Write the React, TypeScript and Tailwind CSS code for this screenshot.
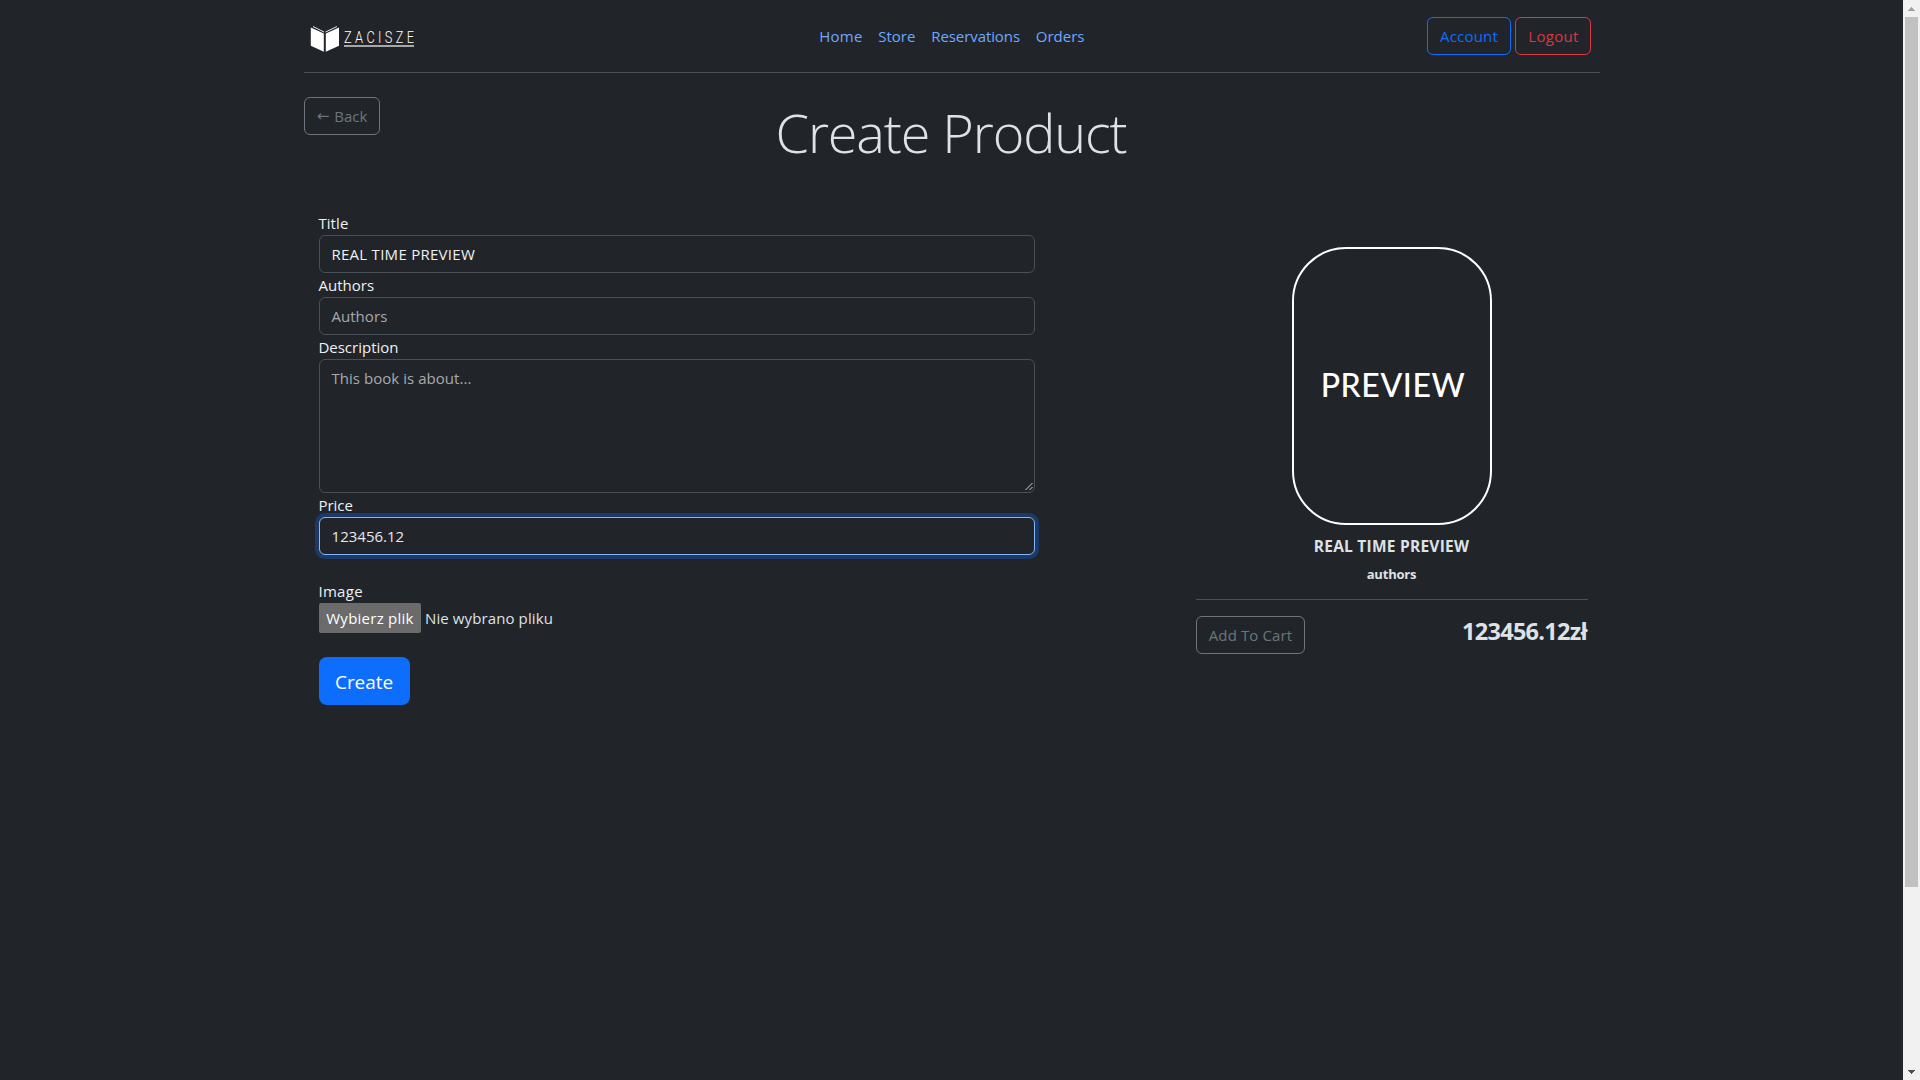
import React, { ReactNode } from "react";

function Label({ children }: { children: ReactNode }) {
  return <label className="-ml-[0.6px] block h-[24px] leading-[24px] text-[#eef1f3]">{children}</label>;
}

function Logo() {
  return (
    <div className="flex h-[56px] w-[110px] items-start pl-[6px] pt-[8px]">
      <svg width="30" height="28" viewBox="0 0 30 28" className="shrink-0">
        <path d="M0.8 2.6 L13.8 8.4 V26.8 L0.8 20.8 Z M29 2.6 L15.8 8.4 V26.8 L29 20.8 Z" fill="#fff" />
        <path d="M3 1.5 L14 7 M27 1.5 L15.5 7" stroke="#fff" strokeWidth="0.9" fill="none" />
      </svg>
      <div className="ml-[4px] mt-[5px] h-[17px] w-[70px] border-b-2 border-[#a4a7a9] font-['Roboto'] text-[16px] leading-[15px] text-white">
        <span className="block w-[88px] origin-left scale-x-[0.8] font-light tracking-[4.2px]">ZACISZE</span>
      </div>
    </div>
  );
}

function Scrollbar() {
  return (
    <div className="flex h-[1080px] w-[17px] shrink-0 flex-col items-center bg-[#f1f1f1]">
      <div className="flex h-[17px] items-center">
        <svg width="7" height="4" viewBox="0 0 7 4" shapeRendering="crispEdges">
          <path d="M3 0h1v1h1v1h1v1h1v1H0V3h1V2h1V1h1z" fill="#a3a3a3" />
        </svg>
      </div>
      <div className="h-[870px] w-[13px] bg-[#c1c1c1]" />
      <div className="mt-auto flex h-[17px] items-center">
        <svg width="7" height="4" viewBox="0 0 7 4" shapeRendering="crispEdges">
          <path d="M0 0h7v1H6v1H5v1H4v1H3V3H2V2H1V1H0z" fill="#505050" />
        </svg>
      </div>
    </div>
  );
}

export default function App() {
  return (
    <div className="flex h-[1080px] w-[1920px] overflow-hidden bg-[#212529] font-['Open_Sans','Noto_Sans',sans-serif] text-[15px] leading-[24px] text-[#dee2e6]">
      <div className="flex-1">
        <div className="ml-[304px] w-[1296px]">
          <header className="flex h-[73px] items-start justify-between border-b border-[#4d5154] pt-[17px]">
            <div className="w-[515px]">
              <Logo />
            </div>
            <nav className="-ml-px flex gap-[16px] pt-[7px] text-[#6ea8fe]">
              <a className="w-[43px] tracking-[0.27px]">Home</a>
              <a className="w-[37px]">Store</a>
              <a className="w-[88.5px] tracking-[-0.08px]">Reservations</a>
              <a className="w-[48px]">Orders</a>
            </nav>
            <div className="flex w-[515px] justify-end gap-[4px] pr-[9px]">
              <button className="h-[38px] w-[84px] rounded-[6px] border border-[#0d6efd] tracking-[0.2px] text-[#0d6efd]">Account</button>
              <button className="h-[38px] w-[76px] rounded-[6px] border border-[#dc3545] pl-px tracking-[0.3px] text-[#dc3545]">Logout</button>
            </div>
          </header>

          <div className="flex h-[138px] items-start justify-between pt-[24px]">
            <button className="flex h-[38px] w-[76px] items-center justify-center gap-[5px] rounded-[6px] border border-[#6c757d] text-[#6c757d]">
              <span className="font-['DejaVu_Sans'] text-[15px]">←</span>
              <span>Back</span>
            </button>
            <h1 className="-ml-[2px] mt-[2px] whitespace-nowrap text-[54px] font-light leading-[67px] tracking-[-1.11px]">Create Product</h1>
            <div className="w-[76px]" />
          </div>

          <main className="flex justify-between pl-[15px] pr-[12px]">
            <form className="w-[716px]">
              <Label>
                <span className="tracking-[0.08px]">Title</span>
              </Label>
              <div className="h-[38px] rounded-[6px] border border-[#495057] px-[11.4px] py-[6px] tracking-[0.28px] text-[#eef1f3]">REAL TIME PREVIEW</div>
              <Label>
                <span className="tracking-[0.04px]">Authors</span>
              </Label>
              <div className="h-[38px] rounded-[6px] border border-[#495057] px-[11.4px] py-[6px] tracking-[0.06px] text-[#a7aaad]">Authors</div>
              <Label>Description</Label>
              <div className="flex h-[134px] justify-between rounded-[6px] border border-[#495057] py-[6px] pl-[11.4px] tracking-[0.05px] text-[#a7aaad]">
                This book is about...
                <svg width="10" height="10" viewBox="0 0 10 10" className="-mb-[6px] -mr-px self-end">
                  <path d="M0.5 8 L7.5 1 M4.5 8 L7.5 5" stroke="#d0d0d0" strokeWidth="1" />
                </svg>
              </div>
              <Label>Price</Label>
              <div className="h-[38px] rounded-[6px] border border-[#86b7fe] px-[11.6px] py-[6px] text-[#e6e9ec] shadow-[0_0_0_4px_#1b3a69]">123456.12</div>
              <div className="mt-[24px]">
                <Label>
                  <span className="tracking-[0.3px]">Image</span>
                </Label>
              </div>
              <div className="flex h-[30px] items-center gap-[4px]">
                <button type="button" className="h-[30px] w-[102px] rounded-[2px] bg-[#6b6b6b] tracking-[0.25px] text-white">Wybierz plik</button>
                <span className="tracking-[0.11px]">Nie wybrano pliku</span>
              </div>
              <button type="button" className="mt-[24px] h-[48px] w-[91px] rounded-[8px] bg-[#0d6efd] pr-px pt-[2px] text-[19px] tracking-[-0.07px] text-white">Create</button>
            </form>

            <section className="w-[392px] pt-[36px]">
              <div className="mx-auto flex h-[278px] w-[200px] items-center justify-center rounded-[54px] border-2 border-white">
                <span className="pb-[3px] pl-[2px] font-['Lato'] text-[32px] font-medium leading-[32px] tracking-[0.57px] text-white">PREVIEW</span>
              </div>
              <h6 className="mt-[12px] h-[19px] pr-px text-center text-[15.5px] font-bold leading-[19px] tracking-[0.24px]">REAL TIME PREVIEW</h6>
              <p className="mt-[9px] h-[19px] pr-px text-center text-[13px] font-bold leading-[19px] tracking-[-0.2px]">authors</p>
              <div className="mt-[15px] flex items-start justify-between border-t border-[#4d5154] pt-[16px]">
                <button className="h-[38px] w-[109px] rounded-[6px] border border-[#6c757d] tracking-[0.12px] text-[#6c757d]">Add To Cart</button>
                <span className="mr-px mt-px text-[23.5px] font-bold leading-[29px] tracking-[-0.71px]">123456.12zł</span>
              </div>
            </section>
          </main>
        </div>
      </div>
      <Scrollbar />
    </div>
  );
}
